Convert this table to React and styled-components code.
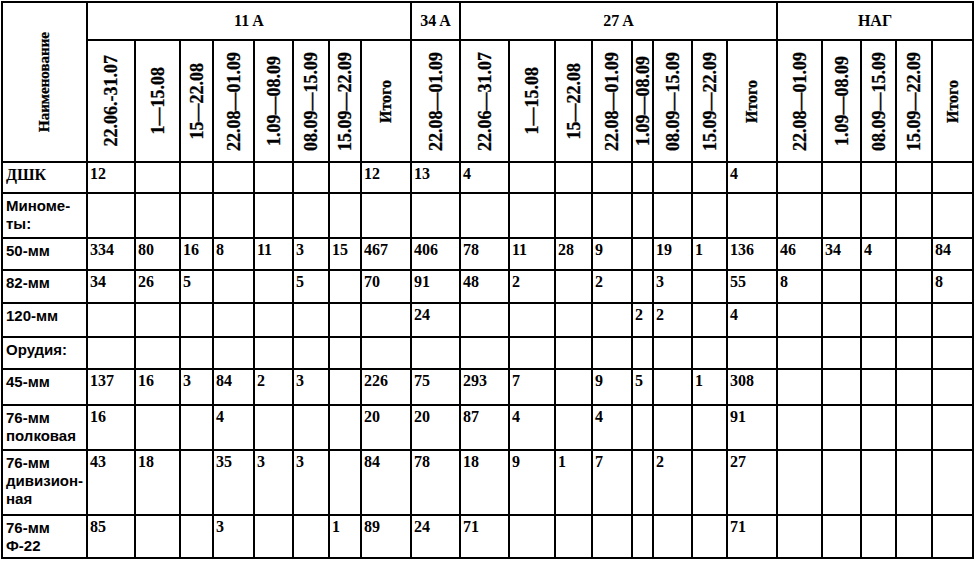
import React from 'react';
import styled, { createGlobalStyle } from 'styled-components';

const GlobalStyle = createGlobalStyle`
  html, body {
    margin: 0;
    background: #fff;
  }
  body {
    padding: 1px 0 0 1px;
  }
`;

const COLS = [83, 46, 43, 31, 39, 37, 34, 30, 48, 47, 47, 44, 35, 38, 19, 37, 33, 48, 43, 37, 33, 34, 39];
const ROWS = [36, 120, 29, 43, 30, 31, 32, 30, 34, 43, 63, 41];

const serif = `"Liberation Serif", "Times New Roman", serif`;
const sans = `"Liberation Sans", Arial, sans-serif`;

const Sheet = styled.div`
  display: grid;
  grid-template-columns: ${COLS.map((w) => `${w}px`).join(' ')};
  grid-template-rows: ${ROWS.map((h) => `${h}px`).join(' ')};
  gap: 2px;
  padding: 2px;
  width: max-content;
  background: #000;
  color: #000;
`;

const Cell = styled.div`
  background: #fff;
  overflow: hidden;
`;

const Corner = styled(Cell)`
  grid-row: span 2;
  display: flex;
  align-items: center;
  justify-content: center;
`;

const GroupHead = styled(Cell)`
  grid-column: span ${(p) => p.$span};
  display: flex;
  align-items: center;
  justify-content: center;
  font: 700 16px ${serif};
`;

const PeriodHead = styled(Cell)`
  display: flex;
  align-items: center;
  justify-content: center;
`;

const Vertical = styled.span`
  writing-mode: vertical-rl;
  transform: rotate(180deg);
  white-space: nowrap;
  font: 700 ${(p) => p.$size || 18}px ${serif};
  line-height: 1;
  -webkit-text-stroke: 0.3px #000;
`;

const Label = styled(Cell)`
  padding: 3px 2px 0 3px;
  font: 700 ${(p) => (p.$serif ? '16px' : '15px')} ${(p) => (p.$serif ? serif : sans)};
  line-height: 18px;
`;

const Value = styled(Cell)`
  padding: 2px 0 0 2px;
  font: 700 16px ${serif};
  line-height: 18px;
  white-space: nowrap;
`;

const groups = [
  { name: '11 A', periods: ['22.06.-31.07', '1—15.08', '15—22.08', '22.08—01.09', '1.09—08.09', '08.09—15.09', '15.09—22.09', 'Итого'] },
  { name: '34 A', periods: ['22.08—01.09'] },
  { name: '27 A', periods: ['22.06—31.07', '1—15.08', '15—22.08', '22.08—01.09', '1.09—08.09', '08.09—15.09', '15.09—22.09', 'Итого'] },
  { name: 'НАГ', periods: ['22.08—01.09', '1.09—08.09', '08.09—15.09', '15.09—22.09', 'Итого'] },
];

const E = '';
const rows = [
  { label: ['ДШК'], serif: true, v: [12, E, E, E, E, E, E, 12, 13, 4, E, E, E, E, E, E, 4, E, E, E, E, E] },
  { label: ['Миноме-', 'ты:'], v: [] },
  { label: ['50-мм'], v: [334, 80, 16, 8, 11, 3, 15, 467, 406, 78, 11, 28, 9, E, 19, 1, 136, 46, 34, 4, E, 84] },
  { label: ['82-мм'], v: [34, 26, 5, E, E, 5, E, 70, 91, 48, 2, E, 2, E, 3, E, 55, 8, E, E, E, 8] },
  { label: ['120-мм'], v: [E, E, E, E, E, E, E, E, 24, E, E, E, E, 2, 2, E, 4] },
  { label: ['Орудия:'], v: [] },
  { label: ['45-мм'], v: [137, 16, 3, 84, 2, 3, E, 226, 75, 293, 7, E, 9, 5, E, 1, 308] },
  { label: ['76-мм', 'полковая'], v: [16, E, E, 4, E, E, E, 20, 20, 87, 4, E, 4, E, E, E, 91] },
  { label: ['76-мм', 'дивизион-', 'ная'], v: [43, 18, E, 35, 3, 3, E, 84, 78, 18, 9, 1, 7, E, 2, E, 27] },
  { label: ['76-мм', 'Ф-22'], v: [85, E, E, 3, E, E, 1, 89, 24, 71, E, E, E, E, E, E, 71] },
];

const DATA_COLS = 22;

export default function App() {
  return (
    <>
      <GlobalStyle />
      <Sheet>
        <Corner>
          <Vertical $size={15}>Наименование</Vertical>
        </Corner>
        {groups.map((g) => (
          <GroupHead key={g.name} $span={g.periods.length}>{g.name}</GroupHead>
        ))}
        {groups.map((g) =>
          g.periods.map((p, i) => (
            <PeriodHead key={g.name + i}>
              <Vertical $size={p === 'Итого' ? 16 : 18}>{p}</Vertical>
            </PeriodHead>
          ))
        )}
        {rows.map((r, ri) => (
          <React.Fragment key={ri}>
            <Label $serif={r.serif}>
              {r.label.map((line, li) => (
                <React.Fragment key={li}>
                  {li > 0 && <br />}
                  {line}
                </React.Fragment>
              ))}
            </Label>
            {Array.from({ length: DATA_COLS }, (_, ci) => (
              <Value key={ci}>{r.v[ci] ?? ''}</Value>
            ))}
          </React.Fragment>
        ))}
      </Sheet>
    </>
  );
}
